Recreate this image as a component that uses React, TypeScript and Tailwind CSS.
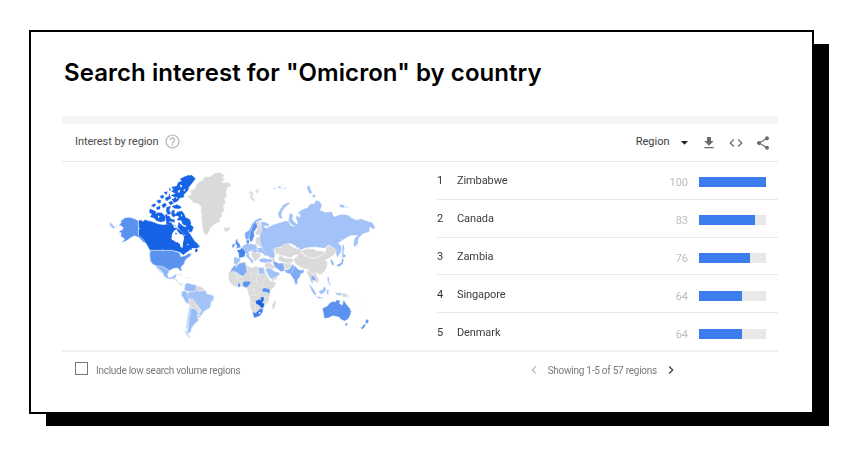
import React from "react";
import {
  MdArrowDropDown,
  MdChevronLeft,
  MdChevronRight,
  MdCode,
  MdFileDownload,
  MdHelpOutline,
  MdShare,
} from "react-icons/md";

interface RegionItem {
  name: string;
  value: number;
}

interface Shape {
  fill: string;
  d: string;
}

interface MapPart {
  x: number;
  y: number;
  shapes: Shape[];
}

const regions: RegionItem[] = [
  { name: "Zimbabwe", value: 100 },
  { name: "Canada", value: 83 },
  { name: "Zambia", value: 76 },
  { name: "Singapore", value: 64 },
  { name: "Denmark", value: 64 },
];

// Shades of the map, from no data to the strongest interest
const NONE = "#dadada";
const LOW = "#a2c2f8";
const MID = "#80abf5";
const HIGH = "#5b92f0";
const TOP = "#1763e6";
const SEA = "#ffffff";

const mapParts: MapPart[] = [
  // North America, upper half
  {
    x: 0,
    y: 0,
    shapes: [
      { fill: HIGH, d: "M115 168V210L126 218L138 234L130 232L118 218L104 212L92 218L82 226L66 234L74 222L62 213L64 204L57 200L68 192L69 187L58 180L64 172L62 168L75 158L90 157L105 162Z" },
      { fill: LOW, d: "M28 170L36 177L46 188L40 191L30 183ZM47 181L52 184L49 188ZM54 202L59 203L57 206Z" },
      { fill: TOP, d: "M117 168L122 165L128 170L135 165L148 168L160 172L175 178L190 180L205 178L213 172L218 180L226 182L230 190L250 205L262 210L268 205L275 215L283 228L291 235L299 245L290 249L277 249L268 256L259 262L250 269L240 261L228 258L215 255H150L142 240L130 222L117 211Z" },
      { fill: SEA, d: "M222 198L229 192L234 200L240 207L250 209L252 220L249 235L248 248L242 247L239 236L226 231L214 221L217 205Z" },
      { fill: TOP, d: "M250 37L265 31L278 33L286 41L277 53L266 67L264 76L251 89L252 96L240 98L232 109L222 113L217 104L226 97L213 91L227 86L214 78L221 75L215 66L230 64L235 52L247 48L240 43Z" },
      { fill: TOP, d: "M150 132L163 137L172 143L186 144L196 155L194 168L181 171L168 166L163 159L151 155L156 148L148 142Z" },
      { fill: TOP, d: "M232 141L245 138L251 145L257 158L268 162L273 174L271 179L280 186L276 199L269 202L265 194L254 190L260 183L248 177L244 166L231 165L238 155L225 150Z" },
      { fill: TOP, d: "M155 120L163 116L168 120L160 127ZM170 107L181 104L183 112L176 115ZM180 94L189 90L192 96L185 101ZM192 82L202 80L199 90ZM195 100L206 94L208 102L200 108ZM206 112L215 108L220 116L210 119ZM185 120L195 114L200 121L190 129ZM168 128L180 123L180 131L173 135ZM200 127L212 124L207 136L213 145L204 149L199 138ZM216 124L231 119L245 126L238 131L223 130ZM215 137L223 135L223 146L230 151L220 156L215 150ZM198 154L208 153L212 162L223 164L224 172L212 169L201 170ZM233 185L240 180L252 187L251 195L240 193ZM208 69L212 72L209 78ZM207 86L213 100L208 103ZM236 172L247 182L262 190L266 203L272 212L262 210L250 204L240 196L234 186ZM196 150L201 147L202 158L210 176L200 178Z" },
      { fill: SEA, d: "M240 58L247 62L242 69ZM232 78L241 74L237 85ZM250 75L256 71L253 80ZM227 98L234 96L230 102ZM174 151L180 156L175 159ZM243 148L247 151L243 156ZM218 180L231 186L224 190ZM167 140L172 143L168 147ZM262 236L266 238L262 242Z" },
      { fill: TOP, d: "M286 253L291 251L293 257L286 261ZM226 204L231 205L228 209Z" },
    ],
  },
  // Greenland, Iceland, Scandinavia and western Europe
  {
    x: 210,
    y: 0,
    shapes: [
      { fill: NONE, d: "M105 210L98 195L97 180L94 160L96 148L92 138L94 127L86 116L73 114L64 107L60 101L51 95L65 88L60 79L75 70L79 58L88 51L98 45L104 35L120 35L135 24L150 22L163 31L157 39L165 43L155 52L177 53L185 61L172 70L168 82L171 93L163 103L168 112L160 121L163 137L154 145L157 153L148 162L151 170L137 176L126 184L120 192L114 208Z" },
      { fill: NONE, d: "M161 190L171 187L180 187L180 194L170 200L162 197Z" },
      { fill: "#e2e2e2", d: "M235 82L245 77L252 86L248 95L257 105L250 110L239 99L241 91ZM254 75L269 72L266 81L260 86Z" },
      { fill: MID, d: "M224 215L225 203L238 195L245 178L256 166L271 159L277 164L260 170L249 184L241 205L237 221L230 226Z" },
      { fill: HIGH, d: "M249 180L259 170L263 185L252 200L253 212L248 227L241 231L237 218L241 202Z" },
      { fill: NONE, d: "M261 169L268 165L272 179L278 197L272 209L260 211L255 203L263 192Z" },
      { fill: NONE, d: "M260 216H272L281 234L276 247L259 240L256 226Z" },
      { fill: HIGH, d: "M197 225L204 221L202 229L207 235L213 247L197 251L202 243L196 237ZM187 237L195 237L193 246L186 248Z" },
      { fill: HIGH, d: "M228 227L237 223L238 233L231 239Z" },
      { fill: LOW, d: "M219 242L229 236L247 237L259 241L263 251L253 258L239 258L231 270L221 260L212 252Z" },
      { fill: "#4283ed", d: "M200 256L211 253L216 248L227 260L224 275L207 279L206 264Z" },
      { fill: LOW, d: "M192 275L213 281L203 298L191 296ZM229 267L239 264L237 273L251 288L247 297L236 281L227 275Z" },
      { fill: LOW, d: "M262 249L280 246L294 256L307 265L302 273L283 272L277 264L263 263Z" },
      { fill: NONE, d: "M240 263L257 261L273 267L270 277L255 290L248 278Z" },
      { fill: LOW, d: "M246 257L262 253L263 260L249 264Z" },
    ],
  },
  // Russia
  {
    x: 510,
    y: 0,
    shapes: [
      { fill: LOW, d: "M-28 170L-14 171L-2 178L-5 184L-20 182L-11 190L-6 187L0 184L8 180L22 175L35 171L49 167L57 172L63 182L74 184L66 180L55 168L58 149L62 143L69 151L67 163L74 172L82 178L81 168L77 158L81 150L88 158L91 150L84 142L99 133L115 127L120 117L133 116L138 105L148 109L156 119L153 129L150 135L165 142L185 140L192 155L213 148L234 150L245 159L260 165L273 161L298 170L308 173L316 188L309 193L299 185L298 201L283 205L275 210L266 219L264 235L256 246L250 240L253 221L263 211L240 212L225 221L205 234L215 245L213 260L201 280L198 264L185 247L174 241L164 250L135 246L110 248L91 255L78 244L60 235L41 244L20 250L13 258L15 276L6 283L-10 270L-22 253L-29 232L-32 215L-24 195Z" },
      { fill: LOW, d: "M25 152L24 145L31 132L40 119L58 111L59 116L46 126L37 138L34 151L39 160L30 161ZM110 66L116 61L121 66L120 74L128 81L120 88L114 79ZM126 90L134 88L137 95L130 98ZM208 118L223 120L224 129L209 127ZM228 124L236 127L229 130ZM299 153L306 155L303 159ZM217 240L222 238L223 254L221 264L224 272L217 278L215 263Z" },
      { fill: "#b8d0fa", d: "M8 70L17 66L18 74ZM23 66L30 61L34 68L27 72ZM33 59L39 57L38 62ZM38 71L50 66L47 73ZM29 75L36 74L33 78Z" },
    ],
  },
  // United States, Mexico and South America
  {
    x: 120,
    y: 240,
    shapes: [
      { fill: HIGH, d: "M30 16H95L108 20L119 24L122 35L134 33L145 26L154 24L151 34L142 39L135 47L132 57L123 66L125 79L120 77L114 69L101 70L88 77L77 70L65 64L49 63L37 57L31 47L29 30Z" },
      { fill: "#8fb6f6", d: "M48 63L64 64L77 70L88 77L82 90L86 98L95 97L106 88L110 91L104 101L97 102L85 102L73 95L68 84L61 76L55 70L65 84L62 83L50 68Z" },
      { fill: NONE, d: "M98 101L111 102L114 112L126 116L131 120L121 121L109 109Z" },
      { fill: "#e2e2e2", d: "M107 85L120 87L134 95L121 92ZM137 95L149 97L145 100L136 98Z" },
      { fill: "#98bcf7", d: "M135 118L144 113L151 117L166 119L172 127L165 138L150 140L139 139L132 133Z" },
      { fill: NONE, d: "M169 122L180 124L191 130L190 138L176 139L168 131Z" },
      { fill: LOW, d: "M149 141L164 139L169 133L176 139L190 138L196 134L201 147L214 149L222 155L220 164L213 173L210 189L193 198L183 213L174 207L183 199L179 190L166 175L159 164L147 162L137 151Z" },
      { fill: "#98bcf7", d: "M126 139L137 137L144 145L139 151L147 162L147 179L137 172L130 159L124 151Z" },
      { fill: NONE, d: "M147 163L158 163L168 174L169 180L179 191L181 203L173 201L166 191L153 190L148 178Z" },
      { fill: NONE, d: "M173 208L183 213L181 221L172 219Z" },
      { fill: "#98bcf7", d: "M152 190L165 191L174 202L172 220L177 225L166 235L160 241L155 249L152 260L148 265L142 263L145 244L146 221L150 207Z" },
      { fill: LOW, d: "M148 181L152 191L149 209L145 221L143 247L139 258L145 270L155 280L143 274L136 263L139 243L142 218L146 202Z" },
    ],
  },
  // Africa, Middle East and India
  {
    x: 360,
    y: 225,
    shapes: [
      { fill: NONE, d: "M38 82L45 74L58 68L76 66L81 76L95 83L106 79L116 81L130 82L135 92L141 108L151 122L169 127L163 141L152 151L150 161L148 174L146 186L134 196L130 211L120 224L106 233L100 232L95 212L88 190L91 177L84 159L82 147L75 141L63 138L44 141L34 132L26 119L25 102L31 90Z" },
      { fill: MID, d: "M47 82L58 70L75 67L78 79L81 96L68 109L48 96L38 93L31 99L35 86L42 77L50 73Z" },
      { fill: LOW, d: "M115 82L131 83L134 103L115 103Z" },
      { fill: HIGH, d: "M69 124L91 124L88 136L78 143L68 138ZM54 130L61 129L61 141L54 142Z" },
      { fill: HIGH, d: "M126 146L134 143L150 148L149 161L139 157L128 156Z" },
      { fill: TOP, d: "M108 182L117 179L125 182L122 174L130 171L132 180L125 188L132 191L131 201L124 203L117 194L109 191Z" },
      { fill: "#3f80ed", d: "M97 216L106 219L113 213L119 207L129 205L128 217L119 228L103 234Z" },
      { fill: SEA, d: "M117 217L121 215L121 221L117 221Z" },
      { fill: NONE, d: "M165 180L168 187L163 206L157 208L156 194Z" },
      { fill: LOW, d: "M118 57L132 54L143 57L155 56L158 65L143 68L129 68L119 65Z" },
      { fill: NONE, d: "M134 70L152 68L163 82L158 89L144 82L135 85ZM152 52L165 58L165 65L157 65Z" },
      { fill: LOW, d: "M136 87L145 83L157 89L166 95L180 98L176 107L157 118L149 114L141 99Z" },
      { fill: NONE, d: "M154 117L172 110L174 115L156 125Z" },
      { fill: NONE, d: "M157 30L169 22L185 23L187 15L204 10L214 18L233 27L248 31L241 44L224 45L211 53L199 52L188 46L178 49L177 41L165 43L167 34Z" },
      { fill: NONE, d: "M174 51L183 47L196 55L208 55L222 57L218 66L205 71L190 67L176 62ZM191 70L207 67L216 71L209 86L193 89Z" },
      { fill: MID, d: "M158 64L168 65L175 70L190 69L194 92L183 95L173 87L164 82Z" },
      { fill: MID, d: "M195 91L209 87L217 73L224 78L219 91L211 103L196 97Z" },
      { fill: MID, d: "M219 83L227 78L231 85L241 91L253 88L251 98L242 102L241 109L233 119L232 131L227 135L221 118L213 106L210 101L217 94Z" },
    ],
  },
  // China, South-East Asia and Oceania
  {
    x: 540,
    y: 225,
    shapes: [
      { fill: NONE, d: "M40 57L52 48L63 35L76 49L99 56L119 49L133 41L140 20L149 14L158 22L170 31L163 44L149 53L143 57L136 59L143 68L140 84L129 99L119 104L107 98L96 103L82 88L65 84L52 76L44 68Z" },
      { fill: NONE, d: "M64 32L81 26L99 26L112 33L130 33L134 41L119 49L102 55L83 51L71 42Z" },
      { fill: NONE, d: "M78 94L86 92L95 101L107 99L113 111L118 124L109 130L98 115L96 129L90 122L86 109Z" },
      { fill: MID, d: "M93 110L100 107L107 115L105 124L98 119L98 133L94 126Z" },
      { fill: MID, d: "M152 55L158 62L162 73L157 77L153 66ZM169 76L177 71L184 68L186 55L191 56L190 68L184 76L175 80ZM188 48L192 42L198 48L191 53Z" },
      { fill: LOW, d: "M188 30L193 44L188 39ZM142 110L148 112L147 123L154 138L148 135L142 121ZM141 96L145 97L143 103Z" },
      { fill: LOW, d: "M86 132L97 142L109 160L107 169L97 157ZM116 153L127 149L133 139L139 148L132 160L120 162ZM106 168L119 170L131 174L118 176ZM139 151L149 149L145 155L146 165L140 162ZM164 157L173 159L184 158V167L171 165Z" },
      { fill: NONE, d: "M185 159L194 159L202 164L212 175L197 171L187 171Z" },
      { fill: HIGH, d: "M127 205L142 198L149 189L159 184L166 186L170 179L181 182L178 190L187 196L191 179L198 191L211 207L213 220L205 237L194 243L182 238L177 231L158 227L145 234L133 235L130 219Z" },
      { fill: HIGH, d: "M195 249L203 250L201 258L197 257ZM260 236L267 243L261 252L255 247ZM253 252L258 255L249 267L241 266Z" },
      { fill: "#e3e3e3", d: "M214 162L219 166L215 165ZM232 182L235 187L231 186ZM238 190L242 193L237 192Z" },
    ],
  },
];

// Country borders inside the shapes
const africaBorders =
  "M25 108L48 96M48 96L51 111L66 110M34 118L51 111M81 76V88L92 101V125M68 109L70 125M66 110L47 119M44 128V141M63 126V138M92 101L115 103M115 82V103M134 103L115 103L109 118L113 134M51 119L70 125M91 125L113 121M134 113L128 130L137 142M113 134L128 142M87 138L110 136M84 151L102 145M102 145L105 162M105 162L128 156M90 165L112 167V183M90 188L108 190M107 191V208L98 216M148 168L132 172M132 172V190M130 202L146 180";

// The strongest shade is drawn without a gap so small islands stay solid
function outline(fill: string) {
  if (fill === SEA) return "none";
  return fill === TOP ? TOP : "#ffffff";
}

function WorldMap() {
  return (
    <svg viewBox="0 0 855 540" className="h-[180px] w-[285px]">
      <filter id="coast" x="0" y="0" width="100%" height="100%" colorInterpolationFilters="sRGB">
        <feTurbulence type="fractalNoise" baseFrequency="0.14" numOctaves="1" seed="4" />
        <feDisplacementMap in="SourceGraphic" scale="6" xChannelSelector="R" yChannelSelector="G" />
      </filter>
      <g filter="url(#coast)" strokeWidth="1" strokeLinejoin="round">
        {mapParts.map((part) => (
          <g key={`${part.x}-${part.y}`} transform={`translate(${part.x} ${part.y})`}>
            {part.shapes.map((shape) => (
              <path key={shape.d} d={shape.d} fill={shape.fill} stroke={outline(shape.fill)} />
            ))}
          </g>
        ))}
        <path d={africaBorders} transform="translate(360 225)" fill="none" stroke="#ffffff" />
      </g>
      <path d="M115.5 168V210M150 256H216" stroke="#b9d0f9" strokeWidth="2" />
    </svg>
  );
}

function RegionRow({ rank, name, value }: { rank: number; name: string; value: number }) {
  return (
    <div className="flex h-[37.8px] items-center pt-px pr-3">
      <span className="mt-px w-5 text-[11px] text-[#333]">{rank}</span>
      <span className="mt-px flex-1 text-[11px] tracking-[-0.1px] text-[#3c3c3c]">{name}</span>
      <span className="mt-[5px] mr-[11px] text-[11px] text-[#bdbdbd]">{value}</span>
      <div className="mt-[3px] h-2.5 w-[67px] bg-[#e9e9e9]">
        <div className="h-full bg-[#3b7ded]" style={{ width: `${value}%` }} />
      </div>
    </div>
  );
}

export default function App() {
  return (
    <div className="h-[450px] w-[856px] overflow-hidden bg-white pt-[30px] pl-[29px] font-['Roboto',sans-serif]">
      <div className="h-[384px] w-[785px] border-2 border-black bg-white pl-[31px] shadow-[16px_13px_0_-1px_#000]">
        <h1 className="h-[84px] pt-[23px] pl-0.5 font-['Inter',sans-serif] text-[24px] leading-9 font-semibold tracking-[0.06px] whitespace-nowrap text-black">
          Search interest for "Omicron" by country
        </h1>

        <div className="w-[716px]">
          <div className="h-2 bg-[#f5f5f5]" />

          {/* Panel header */}
          <div className="flex h-[38px] items-center border-b border-[#e6e6e6] pr-[7.5px] pl-[13px]">
            <span className="text-[11px] tracking-[-0.06px] text-[#4a4a4a]">Interest by region</span>
            <MdHelpOutline className="mb-0.5 ml-[5px] text-[#bdbdbd]" size={17} />
            <span className="ml-auto text-[11px] text-[#3c3c3c]">Region</span>
            <MdArrowDropDown className="ml-1.5 text-[#222]" size={17} />
            <div className="ml-2 flex items-center gap-[11px] text-[#6b6b6b]">
              <MdFileDownload size={16} />
              <MdCode size={16} />
              <MdShare size={16} />
            </div>
          </div>

          {/* Map and ranking */}
          <div className="flex h-[190px] border-b-2 border-[#efefef]">
            <div className="w-[375px] pt-[3px] pl-[38px]">
              <WorldMap />
            </div>
            <div className="flex-1 divide-y divide-[#e9e9e9]">
              {regions.map((region, i) => (
                <RegionRow key={region.name} rank={i + 1} name={region.name} value={region.value} />
              ))}
            </div>
          </div>

          {/* Footer */}
          <div className="flex h-9 items-center pl-[13px] text-[10px] text-[#7a7a7a]">
            <span className="mb-[3px] h-[13px] w-[13px] border-[1.5px] border-[#777]" />
            <span className="ml-2 tracking-[-0.27px]">Include low search volume regions</span>
            <div className="mr-[99px] ml-auto flex items-center">
              <MdChevronLeft className="text-[#bdbdbd]" size={16} />
              <span className="mx-1.5 tracking-[-0.25px]">Showing 1-5 of 57 regions</span>
              <MdChevronRight className="text-[#444]" size={16} />
            </div>
          </div>
        </div>
      </div>
    </div>
  );
}
